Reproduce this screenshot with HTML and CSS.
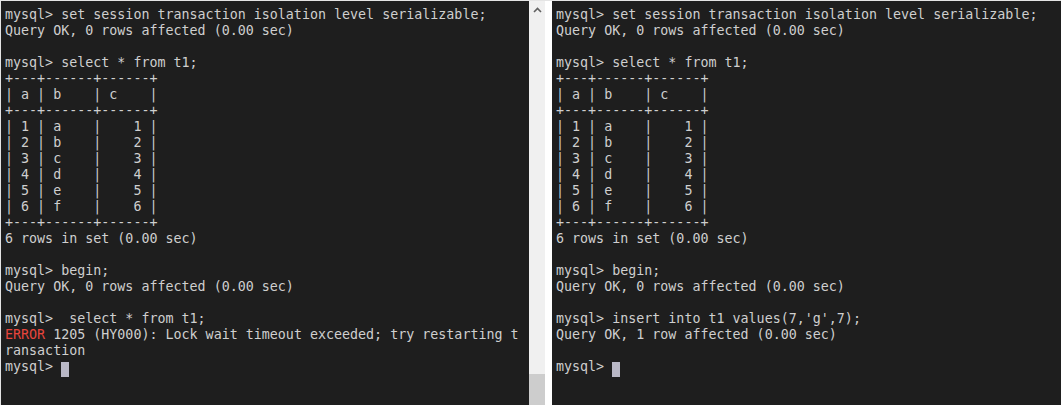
FILE: index.html
```html
<!DOCTYPE html>
<html>
<head>
<meta charset="utf-8">
<link rel="stylesheet" href="styles.css">
</head>
<body>
<div class="screen">
  <div class="pane left">
<pre class="term">mysql&gt; set session transaction isolation level serializable;
Query OK, 0 rows affected (0.00 sec)

mysql&gt; select * from t1;
+---+------+------+
| a | b    | c    |
+---+------+------+
| 1 | a    |    1 |
| 2 | b    |    2 |
| 3 | c    |    3 |
| 4 | d    |    4 |
| 5 | e    |    5 |
| 6 | f    |    6 |
+---+------+------+
6 rows in set (0.00 sec)

mysql&gt; begin;
Query OK, 0 rows affected (0.00 sec)

mysql&gt;  select * from t1;
<span class="err">ERROR</span> 1205 (HY000): Lock wait timeout exceeded; try restarting t
ransaction
mysql&gt; <span class="cursor"> </span></pre>
  </div>
  <div class="scrollbar">
    <div class="arrow"><svg width="9" height="6" viewBox="0 0 9 6"><path d="M1 5 L4.5 1.5 L8 5" fill="none" stroke="#606060" stroke-width="1.6"/></svg></div>
    <div class="track"></div>
    <div class="thumb"></div>
  </div>
  <div class="gap"></div>
  <div class="pane right">
<pre class="term">mysql&gt; set session transaction isolation level serializable;
Query OK, 0 rows affected (0.00 sec)

mysql&gt; select * from t1;
+---+------+------+
| a | b    | c    |
+---+------+------+
| 1 | a    |    1 |
| 2 | b    |    2 |
| 3 | c    |    3 |
| 4 | d    |    4 |
| 5 | e    |    5 |
| 6 | f    |    6 |
+---+------+------+
6 rows in set (0.00 sec)

mysql&gt; begin;
Query OK, 0 rows affected (0.00 sec)

mysql&gt; insert into t1 values(7,'g',7);
Query OK, 1 row affected (0.00 sec)

mysql&gt; <span class="cursor"> </span></pre>
  </div>
</div>
</body>
</html>
```

FILE: styles.css
```css
html, body {
  margin: 0;
  padding: 0;
  background: #ffffff;
  width: 1061px;
  height: 405px;
  overflow: hidden;
}
.screen {
  display: flex;
  height: 405px;
  box-sizing: border-box;
  padding: 1px 0 0 1px;
  background: #e4e4e4;
}
.pane {
  background: #1e1e1e;
  box-sizing: border-box;
  height: 404px;
  overflow: hidden;
}
.left {
  width: 528px;
  padding: 6px 0 0 4px;
}
.right {
  flex: 1;
  padding: 6px 0 0 4px;
}
.term {
  margin: 0;
  font-family: "DejaVu Sans Mono", monospace;
  font-size: 13.33px;
  line-height: 16px;
  color: #cfcfcf;
  white-space: pre;
}
.err {
  color: #e8453c;
}
.cursor {
  display: inline-block;
  width: 8px;
  height: 15px;
  background: #b9b8c6;
  vertical-align: -3px;
}
.scrollbar {
  width: 16px;
  height: 404px;
  background: #f0f0f0;
  display: flex;
  flex-direction: column;
}
.arrow {
  height: 17px;
  display: flex;
  align-items: center;
  justify-content: center;
}
.track {
  flex: 1;
}
.thumb {
  height: 31px;
  background: #cdcdcd;
}
.gap {
  width: 7px;
  background: #ffffff;
}
```
